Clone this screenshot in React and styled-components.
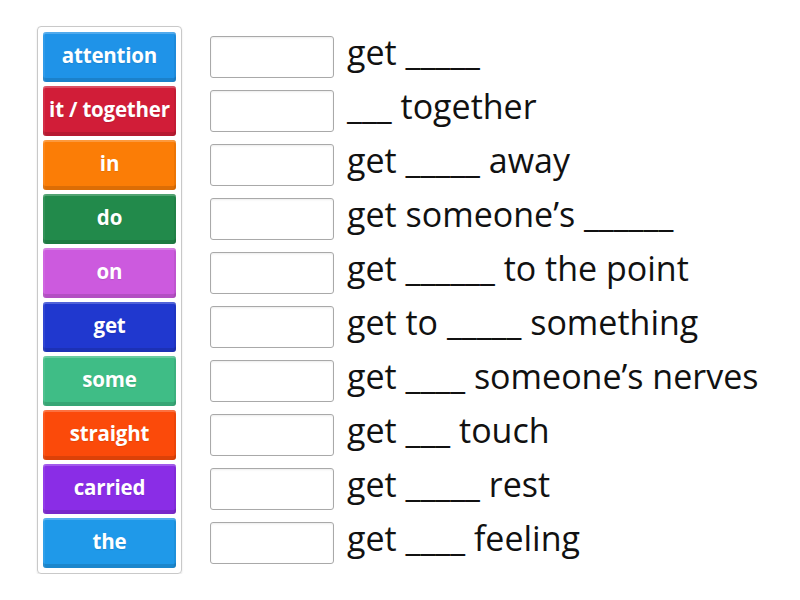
import styled, { createGlobalStyle } from 'styled-components';

const GlobalStyle = createGlobalStyle`
    body {
        margin: 0;
        background: #fff;
        font-family: "Open Sans", "Liberation Sans", sans-serif;
    }
`;

const Page = styled.div`
    display: flex;
    align-items: flex-start;
    gap: 28px;
    padding: 26px 0 0 37px;
`;

const Bank = styled.div`
    display: flex;
    flex-direction: column;
    gap: 4px;
    padding: 5px;
    border: 1px solid #c9c9c9;
    border-radius: 4px;
    box-shadow: 0 1px 2px rgba(0, 0, 0, 0.12);
`;

// 단어 타일
const Tile = styled.div`
    width: 133px;
    height: 50px;
    box-sizing: border-box;
    display: flex;
    align-items: center;
    justify-content: center;
    padding-bottom: 4px;
    border-radius: 3px;
    background-color: ${(props) => props.color};
    box-shadow: inset 0 2px 0 rgba(255, 255, 255, 0.22),
        inset 0 -4px 0 rgba(0, 0, 0, 0.12),
        inset 2px 0 0 rgba(255, 255, 255, 0.08),
        inset -2px 0 0 rgba(0, 0, 0, 0.06);
    color: #fff;
    font-weight: 700;
    font-size: 20.5px;
    white-space: nowrap;
    letter-spacing: -0.2px;
    text-shadow: 0 1px 1px rgba(0, 0, 0, 0.1);
`;

const Rows = styled.div`
    display: flex;
    flex-direction: column;
    gap: 4px;
    padding-top: 6px;
`;

const Row = styled.div`
    display: flex;
    align-items: center;
    height: 50px;
`;

const Slot = styled.div`
    width: 124px;
    height: 42px;
    box-sizing: border-box;
    border: 1px solid #a9a9a9;
    border-radius: 3px;
    background: #fff;
    box-shadow: inset 0 1px 2px rgba(0, 0, 0, 0.08);
`;

const Clue = styled.span`
    margin-left: 13px;
    font-size: 34px;
    color: #111;
    white-space: nowrap;
    line-height: 1;
    margin-top: -11px;
`;

const tiles = [
    ['attention', '#1f93e8'],
    ['it / together', '#d11d38'],
    ['in', '#fb7d06'],
    ['do', '#228a4b'],
    ['on', '#cc5ade'],
    ['get', '#2038cf'],
    ['some', '#3fbd86'],
    ['straight', '#fb4a0a'],
    ['carried', '#8a2de6'],
    ['the', '#1f99e9'],
];

const clues = [
    'get _____',
    '___ together',
    'get _____ away',
    'get someone\u2019s ______',
    'get ______ to the point',
    'get to _____ something',
    'get ____ someone\u2019s nerves',
    'get ___ touch',
    'get _____ rest',
    'get ____ feeling',
];

export default function App() {
    return (
        <Page>
            <GlobalStyle />
            <Bank>
                {tiles.map(([word, color]) => (
                    <Tile key={word} color={color}>
                        {word}
                    </Tile>
                ))}
            </Bank>
            <Rows>
                {clues.map((text) => (
                    <Row key={text}>
                        <Slot />
                        <Clue>{text}</Clue>
                    </Row>
                ))}
            </Rows>
        </Page>
    );
}
